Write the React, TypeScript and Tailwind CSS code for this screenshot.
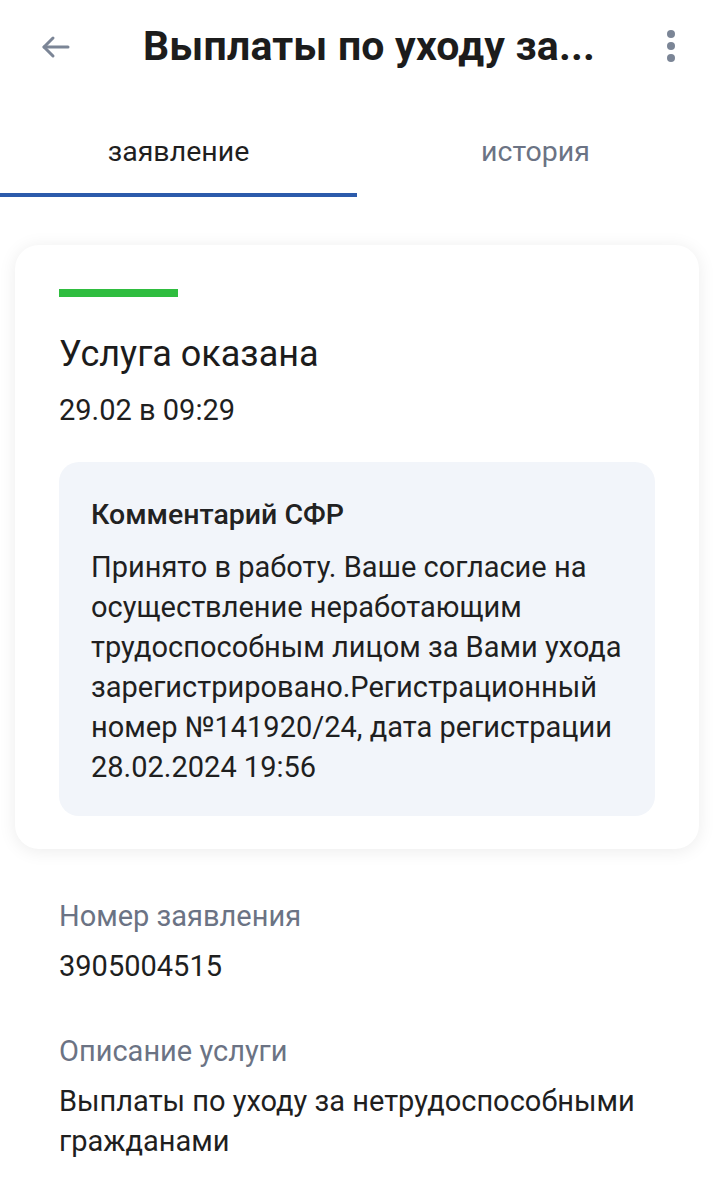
import { useState } from 'react';

const font = { fontFamily: 'Roboto, "Noto Sans", sans-serif' };

const App = () => {
  const [tab, setTab] = useState('app');

  return (
    <div className="min-h-[1200px] w-[714px] bg-white text-[#1f1f1f]" style={font}>
      {/* top bar */}
      <header className="flex h-[94px] items-center pl-[36px] pr-[33px]">
        <button className="flex h-[40px] w-[40px] items-center justify-center text-[#7b8596]">
          <svg width="36" height="36" viewBox="0 0 24 24" fill="none" stroke="currentColor" strokeWidth="2" strokeLinecap="round" strokeLinejoin="round">
            <path d="M20 12H4" />
            <path d="M10 6l-6 6 6 6" />
          </svg>
        </button>
        <h1 className="ml-[67px] flex-1 truncate text-[41px] font-bold tracking-[0.2px] text-[#1c1c1c]">
          Выплаты по уходу за...
        </h1>
        <div className="flex w-[20px] flex-col items-center gap-[4px] pb-[2px]">
          <span className="h-[8px] w-[8px] rounded-full bg-[#7b8596]" />
          <span className="h-[8px] w-[8px] rounded-full bg-[#7b8596]" />
          <span className="h-[8px] w-[8px] rounded-full bg-[#7b8596]" />
        </div>
      </header>

      {/* tabs */}
      <nav className="mt-[20px] grid grid-cols-2">
        {[
          { id: 'app', label: 'заявление' },
          { id: 'hist', label: 'история' },
        ].map((t) => (
          <button
            key={t.id}
            onClick={() => setTab(t.id)}
            className={`flex h-[83px] flex-col items-center justify-between pt-[17px] text-[28.5px] ${
              tab === t.id ? 'text-[#1f1f1f]' : 'text-[#6b7384]'
            }`}
          >
            <span>{t.label}</span>
            <span className={`h-[4px] w-full ${tab === t.id ? 'bg-[#2c5bab]' : 'bg-transparent'}`} />
          </button>
        ))}
      </nav>

      {/* status card */}
      <section className="mx-[15px] mt-[48px] rounded-[24px] bg-white px-[44px] pb-[33px] pt-[44px] shadow-[0_2px_18px_rgba(0,0,0,0.08)]">
        <div className="h-[8px] w-[119px] bg-[#2fbd3f]" />
        <h2 className="mt-[37px] text-[36px] leading-[40px] text-[#1c1c1c]">Услуга оказана</h2>
        <p className="mt-[20px] text-[29px] leading-[32px]">29.02 в 09:29</p>

        <div className="mt-[36px] rounded-[20px] bg-[#f2f5fa] px-[32px] pb-[29px] pt-[35px]">
          <h3 className="text-[28.5px] font-medium leading-[36px] text-[#222]">Комментарий СФР</h3>
          <p className="mt-[14px] text-[29px] leading-[40px] text-[#1f1f1f]">
            Принято в работу. Ваше согласие на осуществление неработающим трудоспособным лицом за Вами ухода
            зарегистрировано.Регистрационный номер №141920/24, дата регистрации 28.02.2024 19:56
          </p>
        </div>
      </section>

      {/* details */}
      <div className="px-[59px] pt-[47px]">
        <div>
          <p className="text-[29px] leading-[40px] text-[#6b7384]">Номер заявления</p>
          <p className="mt-[10px] text-[29px] leading-[40px]">3905004515</p>
        </div>
        <div className="mt-[45px]">
          <p className="text-[29px] leading-[40px] text-[#6b7384]">Описание услуги</p>
          <p className="mt-[10px] text-[29px] leading-[40px]">Выплаты по уходу за нетрудоспособными гражданами</p>
        </div>
      </div>
    </div>
  );
};

export default App;
